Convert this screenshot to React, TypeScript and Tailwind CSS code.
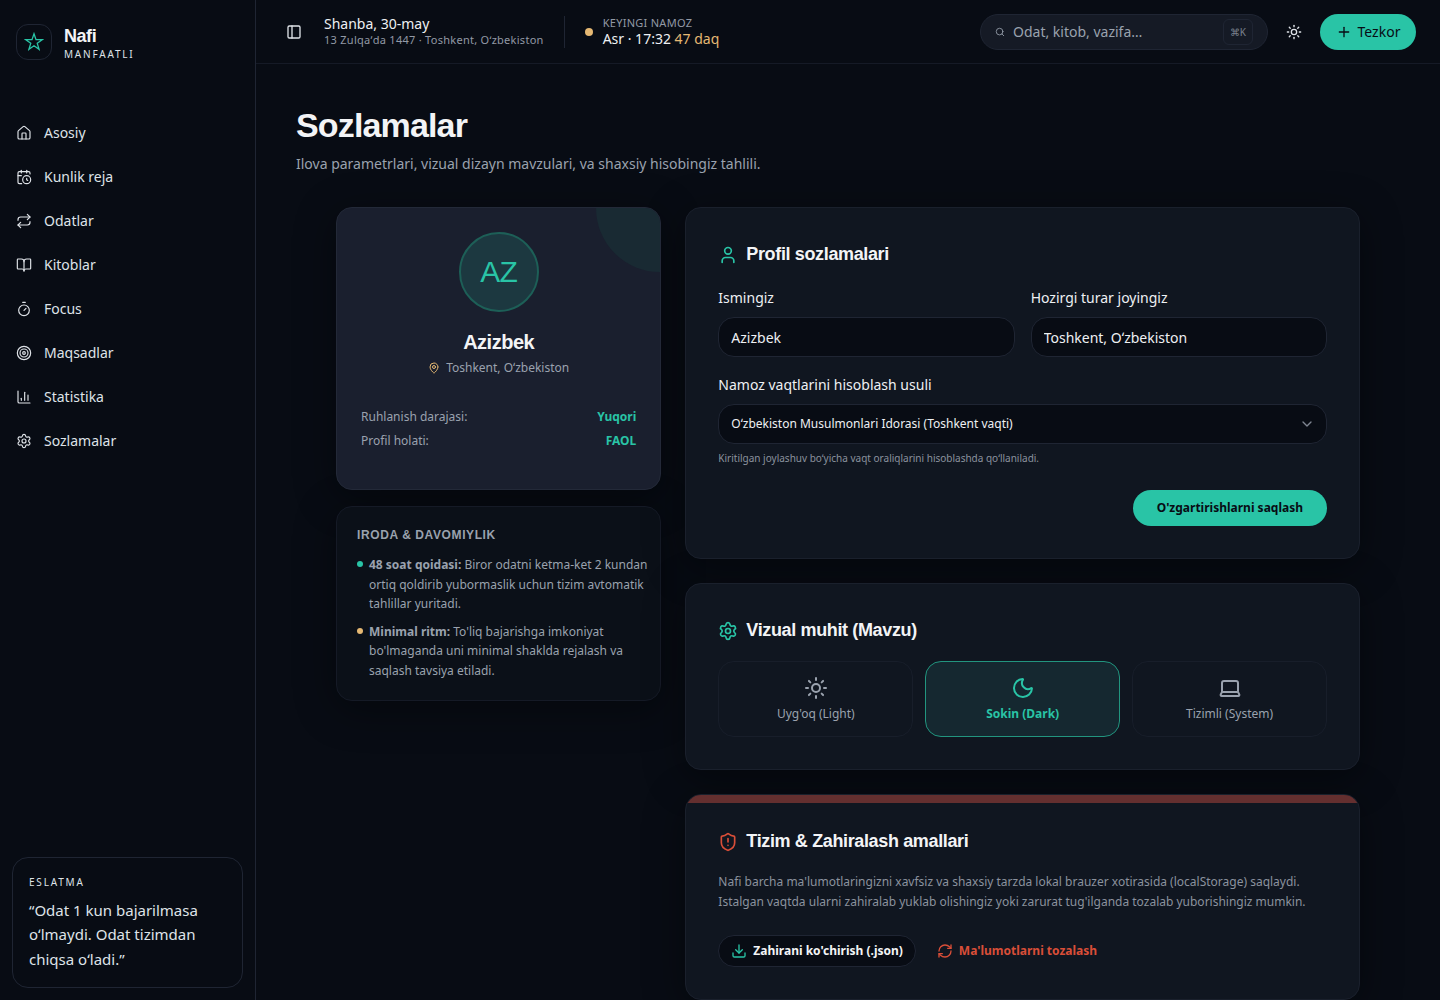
import React, { useState } from "react";
import {
  BookOpen,
  CalendarClock,
  ChartColumn,
  ChevronDown,
  Download,
  House,
  Laptop,
  MapPin,
  Moon,
  PanelLeft,
  Plus,
  RefreshCw,
  Repeat,
  Search,
  Settings,
  ShieldAlert,
  Sun,
  Target,
  Timer,
  User,
} from "lucide-react";

const navItems = [
  { title: "Asosiy", icon: House },
  { title: "Kunlik reja", icon: CalendarClock },
  { title: "Odatlar", icon: Repeat },
  { title: "Kitoblar", icon: BookOpen },
  { title: "Focus", icon: Timer },
  { title: "Maqsadlar", icon: Target },
  { title: "Statistika", icon: ChartColumn },
  { title: "Sozlamalar", icon: Settings },
];

const themes = [
  { id: "light", label: "Uyg'oq (Light)", icon: Sun },
  { id: "dark", label: "Sokin (Dark)", icon: Moon },
  { id: "system", label: "Tizimli (System)", icon: Laptop },
];

const inputClass =
  "h-10 w-full rounded-2xl border border-[#1f2533] bg-[#080c14] px-3 text-[#eef0f3] outline-none";

const Sidebar = () => {
  return (
    <aside className="flex h-full w-64 shrink-0 flex-col border-r border-[#1f2533]">
      <div className="flex items-start gap-3 px-4 pt-6">
        <div className="flex size-9 items-center justify-center rounded-xl border border-[#1f2533]">
          <svg width="20" height="20" viewBox="0 0 24 24" fill="none" stroke="#29c4a6" strokeWidth="1.6">
            <path d="M12 2.2 14.4 9.2H21.8L15.9 13.6 18.1 20.8 12 16.5 5.9 20.8 8.1 13.6 2.2 9.2H9.6Z" />
          </svg>
        </div>
        <div className="pt-0.5">
          <div className="font-['Liberation_Sans',sans-serif] text-lg leading-5 font-bold tracking-tight text-[#f3f4f6]">
            Nafi
          </div>
          <div className="text-[10px] leading-4 tracking-[0.18em]">MANFAATLI</div>
        </div>
      </div>

      <nav className="mt-[51px] flex flex-col gap-1 px-2">
        {navItems.map((item) => (
          <a key={item.title} href="#" className="flex h-10 items-center gap-3 rounded-xl px-2 text-sm">
            <item.icon size={16} strokeWidth={1.75} />
            <span>{item.title}</span>
          </a>
        ))}
      </nav>

      <div className="mx-3 mt-auto mb-3 rounded-2xl border border-[#1f2533] p-4">
        <p className="text-[10px] leading-4 tracking-[0.18em]">ESLATMA</p>
        <p className="mt-2 text-[15px] leading-relaxed">
          “Odat 1 kun bajarilmasa oʻlmaydi. Odat tizimdan chiqsa oʻladi.”
        </p>
      </div>
    </aside>
  );
};

const Header = () => {
  const [query, setQuery] = useState<string>("");
  return (
    <header className="flex h-16 shrink-0 items-center border-b border-[#151a26] px-5 pr-6">
      <button aria-label="Menyu" className="flex size-9 items-center justify-center rounded-full">
        <PanelLeft size={16} />
      </button>
      <div className="ml-3">
        <div className="text-sm leading-4 text-[#eef0f3]">Shanba, 30-may</div>
        <div className="text-[11px] leading-4 tracking-wide text-[#9299a5]">
          13 Zulqaʼda 1447 · Toshkent, Oʻzbekiston
        </div>
      </div>
      <div className="ml-5 h-8 w-px bg-[#1f2533]" />
      <div className="ml-5 flex items-center gap-2.5">
        <span className="size-2 rounded-full bg-[#e5b873]" />
        <div className="pb-0.5">
          <div className="text-[11px] leading-4 tracking-wide text-[#9299a5]">KEYINGI NAMOZ</div>
          <div className="text-sm leading-4 text-[#eef0f3]">
            Asr · 17:32 <span className="text-[#e5b873]">47 daq</span>
          </div>
        </div>
      </div>

      <div className="ml-auto flex items-center gap-2">
        <label className="flex h-9 w-72 items-center gap-2 rounded-full border border-[#1f2533] bg-[#151a25] px-3.5 text-[#9aa2ae]">
          <Search size={10} className="shrink-0" />
          <input
            aria-label="Qidirish"
            type="text"
            placeholder="Odat, kitob, vazifa…"
            className="min-w-0 flex-1 bg-transparent text-sm outline-none placeholder:text-[#9aa2ae]"
            value={query}
            onChange={(e) => {
              setQuery(e.target.value);
            }}
          />
          <kbd className="rounded-md border border-[#1f2533] px-1.5 py-1 font-['Noto_Sans',sans-serif] text-[10px] leading-4 text-[#7a818d]">
            ⌘K
          </kbd>
        </label>
        <button aria-label="Mavzu" className="flex size-9 items-center justify-center rounded-full">
          <Sun size={16} />
        </button>
        <button className="flex h-9 w-24 items-center justify-center gap-1.5 rounded-full bg-[#29c4a6] text-sm text-[#080c14]">
          <Plus size={16} />
          Tezkor
        </button>
      </div>
    </header>
  );
};

const ProfileCard = () => {
  return (
    <section className="relative overflow-hidden rounded-2xl border border-[#232938] bg-[#1a1f2e] p-6">
      <div className="absolute -top-16 -right-16 size-32 rounded-full bg-[#192a33]" />
      <div className="mx-auto flex size-20 items-center justify-center rounded-full border-2 border-[#1d5f57] bg-[#1c3840] font-['Liberation_Sans',sans-serif] text-3xl tracking-tight text-[#29c4a6]">
        AZ
      </div>
      <h2 className="mt-4 text-center font-['Liberation_Sans',sans-serif] text-xl leading-7 font-bold tracking-tight text-[#f3f4f6]">
        Azizbek
      </h2>
      <p className="mt-1 flex items-center justify-center gap-1.5 text-xs text-[#9aa2ae]">
        <MapPin size={12} className="text-[#e5b873]" />
        Toshkent, Oʻzbekiston
      </p>
      <dl className="mt-[33px] mb-4 flex flex-col gap-2 text-xs text-[#9aa2ae]">
        <div className="flex justify-between">
          <dt>Ruhlanish darajasi:</dt>
          <dd className="font-bold text-[#29c4a6]">Yuqori</dd>
        </div>
        <div className="flex justify-between">
          <dt>Profil holati:</dt>
          <dd className="font-bold text-[#29c4a6]">FAOL</dd>
        </div>
      </dl>
    </section>
  );
};

const RulesCard = () => {
  return (
    <section className="rounded-2xl border border-[#151a26] bg-[#0b1018] p-5 pr-3 text-xs text-[#9aa2ae]">
      <h4 className="font-['Liberation_Sans',sans-serif] font-bold tracking-wider">IRODA &amp; DAVOMIYLIK</h4>
      <ul className="mt-3 flex flex-col gap-2 leading-relaxed">
        <li className="flex gap-1.5">
          <span className="mt-1.5 size-1.5 shrink-0 rounded-full bg-[#29c4a6]" />
          <p>
            <strong>48 soat qoidasi:</strong> Biror odatni ketma-ket 2 kundan ortiq qoldirib yubormaslik uchun tizim
            avtomatik tahlillar yuritadi.
          </p>
        </li>
        <li className="flex gap-1.5">
          <span className="mt-1.5 size-1.5 shrink-0 rounded-full bg-[#e5b873]" />
          <p>
            <strong>Minimal ritm:</strong> To'liq bajarishga imkoniyat bo'lmaganda uni minimal shaklda rejalash va
            saqlash tavsiya etiladi.
          </p>
        </li>
      </ul>
    </section>
  );
};

type CardProps = {
  title: string;
  icon: React.ReactNode;
  danger?: boolean;
  children: React.ReactNode;
};
const Card = ({ title, icon, danger, children }: CardProps) => {
  return (
    <section className="relative overflow-hidden rounded-2xl border border-[#1a202c] bg-[#101620] p-8">
      {danger && <div className="absolute inset-x-0 top-0 h-2 bg-[#642f2f]" />}
      <h3 className="flex items-center gap-2 font-['Liberation_Sans',sans-serif] text-lg leading-[29px] font-bold tracking-[-0.02em] text-[#f3f4f6]">
        {icon}
        {title}
      </h3>
      {children}
    </section>
  );
};

const App = () => {
  const [name, setName] = useState<string>("Azizbek");
  const [place, setPlace] = useState<string>("Toshkent, Oʻzbekiston");
  const [theme, setTheme] = useState<string>("dark");

  return (
    <div className="flex h-screen bg-[#080c14] font-['Noto_Sans',sans-serif] text-[#dfe3e8]">
      <Sidebar />
      <div className="flex min-w-0 flex-1 flex-col">
        <Header />
        <main className="flex-1 overflow-y-auto px-10 pt-10 pb-10 [scrollbar-width:none]">
          <h1 className="font-['Liberation_Sans',sans-serif] text-[34px] leading-[42px] font-bold tracking-tight text-[#f3f4f6]">
            Sozlamalar
          </h1>
          <p className="mt-2 text-sm text-[#9aa2ae]">
            Ilova parametrlari, vizual dizayn mavzulari, va shaxsiy hisobingiz tahlili.
          </p>

          <div className="mx-auto mt-[33px] grid max-w-5xl grid-cols-3 items-start gap-6">
            <div className="flex flex-col gap-4">
              <div className="rounded-2xl shadow-[0_8px_40px_rgba(0,0,0,0.4)]">
                <ProfileCard />
              </div>
              <div className="rounded-2xl shadow-[0_8px_40px_rgba(0,0,0,0.4)]">
                <RulesCard />
              </div>
            </div>

            <div className="col-span-2 flex flex-col gap-6">
              <div className="rounded-2xl shadow-[0_8px_40px_rgba(0,0,0,0.4)]">
                <Card title="Profil sozlamalari" icon={<User size={20} className="text-[#29c4a6]" />}>
                  <div className="mt-[17px] grid grid-cols-2 gap-4 text-sm leading-[23px] text-[#eef0f3]">
                    <div className="flex flex-col gap-2">
                      <label htmlFor="name">Ismingiz</label>
                      <input
                        id="name"
                        className={inputClass}
                        value={name}
                        onChange={(e) => {
                          setName(e.target.value);
                        }}
                      />
                    </div>
                    <div className="flex flex-col gap-2">
                      <label htmlFor="place">Hozirgi turar joyingiz</label>
                      <input
                        id="place"
                        className={inputClass}
                        value={place}
                        onChange={(e) => {
                          setPlace(e.target.value);
                        }}
                      />
                    </div>
                    <div className="col-span-2 flex flex-col gap-2">
                      <label htmlFor="method">Namoz vaqtlarini hisoblash usuli</label>
                      <div className="relative">
                        <select id="method" className={`${inputClass} appearance-none text-xs`}>
                          <option>Oʻzbekiston Musulmonlari Idorasi (Toshkent vaqti)</option>
                        </select>
                        <ChevronDown
                          size={16}
                          className="pointer-events-none absolute inset-y-0 right-3 my-auto text-[#7f8692]"
                        />
                      </div>
                    </div>
                  </div>
                  <p className="mt-1.5 text-[10px] leading-4 text-[#8b929e]">
                    Kiritilgan joylashuv boʻyicha vaqt oraliqlarini hisoblashda qoʻllaniladi.
                  </p>
                  <div className="mt-6 flex justify-end">
                    <button className="h-9 rounded-full bg-[#29c4a6] px-6 text-xs font-bold text-[#080c14]">
                      O'zgartirishlarni saqlash
                    </button>
                  </div>
                </Card>
              </div>

              <div className="rounded-2xl shadow-[0_8px_40px_rgba(0,0,0,0.4)]">
                <Card title="Vizual muhit (Mavzu)" icon={<Settings size={20} className="text-[#29c4a6]" />}>
                  <div className="mt-4 grid grid-cols-3 gap-3">
                    {themes.map((item) => (
                      <button
                        key={item.id}
                        onClick={() => {
                          setTheme(item.id);
                        }}
                        className={
                          theme === item.id
                            ? "flex flex-col items-center gap-1.5 rounded-2xl border border-[#22957f] bg-[#152830] p-3.5 text-xs font-bold text-[#29c4a6]"
                            : "flex flex-col items-center gap-1.5 rounded-2xl border border-[#181e2a] p-3.5 text-xs text-[#9aa2ae]"
                        }
                      >
                        <item.icon size={24} />
                        {item.label}
                      </button>
                    ))}
                  </div>
                </Card>
              </div>

              <div className="rounded-2xl shadow-[0_8px_40px_rgba(0,0,0,0.4)]">
                <Card
                  danger
                  title="Tizim & Zahiralash amallari"
                  icon={<ShieldAlert size={20} className="text-[#d94e38]" />}
                >
                  <p className="mt-4 text-xs leading-relaxed text-[#8b929e]">
                    Nafi barcha ma'lumotlaringizni xavfsiz va shaxsiy tarzda lokal brauzer xotirasida (localStorage)
                    saqlaydi. Istalgan vaqtda ularni zahiralab yuklab olishingiz yoki zarurat tug'ilganda tozalab
                    yuborishingiz mumkin.
                  </p>
                  <div className="mt-6 flex gap-2 text-xs font-bold">
                    <button className="flex h-8 items-center gap-1.5 rounded-full border border-[#1f2533] bg-[#080c14] px-3 text-[#f3f4f6]">
                      <Download size={16} className="text-[#29c4a6]" />
                      Zahirani ko'chirish (.json)
                    </button>
                    <button className="flex h-8 items-center gap-1.5 rounded-full border border-transparent px-3 text-[#d94e38]">
                      <RefreshCw size={16} />
                      Ma'lumotlarni tozalash
                    </button>
                  </div>
                </Card>
              </div>
            </div>
          </div>
        </main>
      </div>
    </div>
  );
};

export default App;
